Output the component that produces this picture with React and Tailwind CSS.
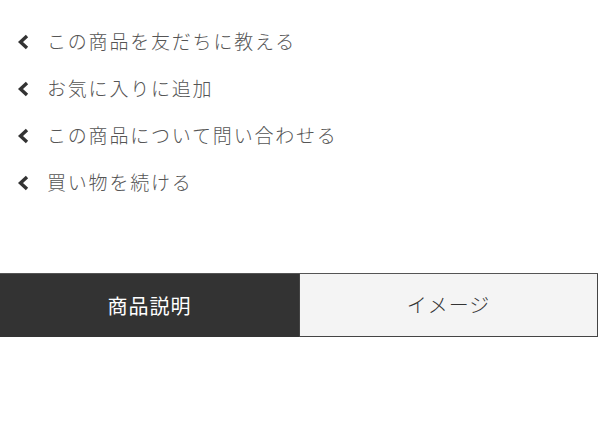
import React from "react";

const links = [
  "この商品を友だちに教える",
  "お気に入りに追加",
  "この商品について問い合わせる",
  "買い物を続ける",
];

const Chevron = () => (
  <svg viewBox="0 0 12 16" className="w-[12px] h-[16px] shrink-0" fill="none">
    <path d="M10 2 L3.5 8 L10 14" stroke="#333" strokeWidth="3.4" strokeLinecap="butt" strokeLinejoin="miter" />
  </svg>
);

const App = () => {
  return (
    <div
      className="w-[598px] h-[430px] bg-white overflow-hidden"
      style={{ fontFamily: '"Noto Sans CJK JP", "Noto Sans", sans-serif' }}
    >
      <ul className="pt-[18px] pl-[17px]">
        {links.map((label) => (
          <li key={label} className="h-[47px] flex items-center gap-[18px]">
            <Chevron />
            <span className="text-[19px] font-light tracking-[1.8px] text-[#555]">{label}</span>
          </li>
        ))}
      </ul>

      <div className="mt-[67px] flex h-[64px] border-t border-[#555]">
        <div className="w-[299px] bg-[#333] flex items-center justify-center text-white text-[20px] tracking-[1px]">
          商品説明
        </div>
        <div className="flex-1 bg-[#f4f4f4] border border-t-0 border-[#444] flex items-center justify-center text-[#333] text-[20px] font-light tracking-[1px]">
          イメージ
        </div>
      </div>
    </div>
  );
};

export default App;
